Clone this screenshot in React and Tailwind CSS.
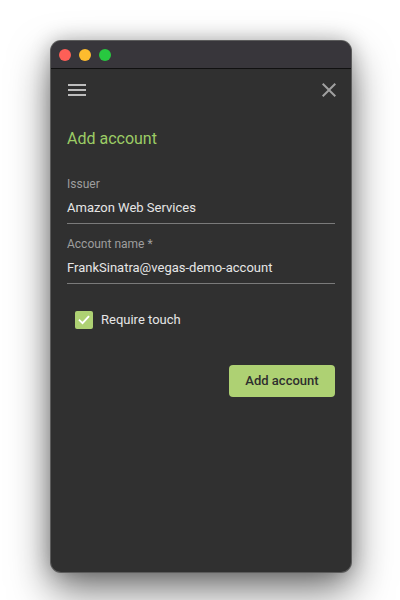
import React from "react";

export default function App() {
  return (
    <div className="w-[400px] h-[600px] bg-white pt-[41px] pl-[51px]" style={{ fontFamily: "Roboto, 'Liberation Sans', sans-serif" }}>
      <div className="w-[300px] h-[531px] rounded-[10px] overflow-hidden bg-[#303030] flex flex-col shadow-[0_0_0_1px_#5c5c5c,0_18px_40px_rgba(0,0,0,0.55),0_0_20px_rgba(0,0,0,0.25)]">
        <div className="h-[28px] bg-[#38363b] border-b border-[#111] flex items-center pl-[8px] gap-[8px] shrink-0">
          <div className="w-[12px] h-[12px] rounded-full bg-[#fe5f57]" />
          <div className="w-[12px] h-[12px] rounded-full bg-[#febc2e]" />
          <div className="w-[12px] h-[12px] rounded-full bg-[#28c840]" />
        </div>
        <div className="h-[42px] flex items-center justify-between pl-[14px] pr-[10px]">
          <svg width="24" height="24" viewBox="0 0 24 24" fill="#bdbdbd">
            <path d="M3 18h18v-2H3v2zm0-5h18v-2H3v2zm0-7v2h18V6H3z" />
          </svg>
          <svg width="24" height="24" viewBox="0 0 24 24" fill="#a0a0a0">
            <path d="M19 6.41L17.59 5 12 10.59 6.41 5 5 6.41 10.59 12 5 17.59 6.41 19 12 13.41 17.59 19 19 17.59 13.41 12z" />
          </svg>
        </div>
        <div className="px-4 flex flex-col">
          <div className="mt-[16px] text-[16px] leading-[24px] text-[#9ccc65]">Add account</div>
          <div className="mt-[25px] text-[12px] leading-[16px] text-[#9e9e9e]">Issuer</div>
          <div className="mt-[6px] text-[13px] leading-[20px] text-[#e6e6e6] pb-[5px] border-b border-[#7a7a7a]">Amazon Web Services</div>
          <div className="mt-[12px] text-[12px] leading-[16px] text-[#9e9e9e]">Account name *</div>
          <div className="mt-[6px] text-[13px] leading-[20px] text-[#e6e6e6] pb-[5px] border-b border-[#7a7a7a]">FrankSinatra@vegas-demo-account</div>
          <div className="mt-[26px] flex items-center h-[20px] pl-[8px] gap-[8px]">
            <div className="w-[18px] h-[18px] rounded-[2px] bg-[#aed173] flex items-center justify-center">
              <svg width="14" height="14" viewBox="0 0 24 24" fill="none" stroke="#ffffff" strokeWidth="3.2" strokeLinecap="square">
                <polyline points="4.5,12.5 9.5,17.5 19.5,6.5" />
              </svg>
            </div>
            <span className="text-[13px] leading-[20px] text-[#e6e6e6]">Require touch</span>
          </div>
          <div className="mt-[35px] flex justify-end">
            <button className="w-[106px] h-[32px] rounded-[4px] bg-[#aed173] text-[13px] font-medium text-[#2e2e2e]">Add account</button>
          </div>
        </div>
      </div>
    </div>
  );
}
